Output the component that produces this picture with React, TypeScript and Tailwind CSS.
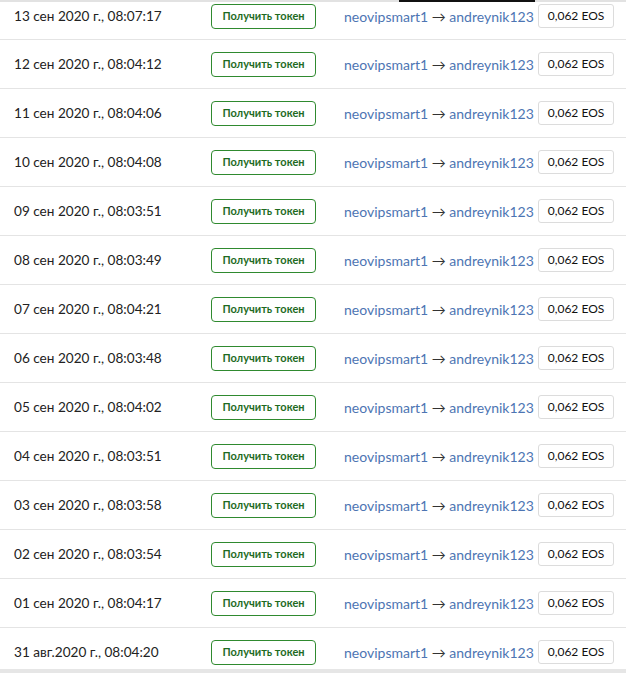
import React from "react";

const rows = [
  "13 сен 2020 г., 08:07:17",
  "12 сен 2020 г., 08:04:12",
  "11 сен 2020 г., 08:04:06",
  "10 сен 2020 г., 08:04:08",
  "09 сен 2020 г., 08:03:51",
  "08 сен 2020 г., 08:03:49",
  "07 сен 2020 г., 08:04:21",
  "06 сен 2020 г., 08:03:48",
  "05 сен 2020 г., 08:04:02",
  "04 сен 2020 г., 08:03:51",
  "03 сен 2020 г., 08:03:58",
  "02 сен 2020 г., 08:03:54",
  "01 сен 2020 г., 08:04:17",
  "31 авг.2020 г., 08:04:20",
];

function Row({ date, first }: { date: string; first?: boolean }) {
  return (
    <div
      className={
        "flex shrink-0 items-center border-b border-[#e4e4e4] bg-white pl-[14px] " +
        (first ? "h-[38px] pb-[9px]" : "h-[49px]")
      }
    >
      <div className="w-[197px] text-[13.6px] text-[#222]">{date}</div>
      <button className="flex h-[25px] w-[105px] items-center justify-center rounded-[4px] border border-[#2f8a2f] bg-white text-[11px] font-bold text-[#1f6b1f]">
        Получить токен
      </button>
      <div className="ml-[28px] w-[194px] whitespace-nowrap text-[14px]">
        <a className="text-[#4d75b3]">neovipsmart1</a>
        <span className="text-[#333]"> → </span>
        <a className="text-[#4d75b3]">andreynik123</a>
      </div>
      <div className="flex h-[24px] w-[76px] items-center justify-center rounded-[3px] border border-[#dcdcdc] bg-white text-[12px] text-[#111]">
        0,062 EOS
      </div>
    </div>
  );
}

export default function App() {
  return (
    <div
      className="flex h-[673px] w-[626px] flex-col overflow-hidden bg-[#e6e6e6]"
      style={{ fontFamily: "Lato, 'Noto Sans', sans-serif" }}
    >
      {/* top edge with dark tab marker */}
      <div className="flex h-[2px] shrink-0 bg-[#e2e2e2]">
        <div className="ml-[399px] h-[2px] w-[136px] bg-[#111]" />
      </div>
      <div className="flex h-[667px] shrink-0 flex-col overflow-hidden bg-white">
        {rows.map((d, i) => (
          <Row key={d} date={d} first={i === 0} />
        ))}
      </div>
    </div>
  );
}
